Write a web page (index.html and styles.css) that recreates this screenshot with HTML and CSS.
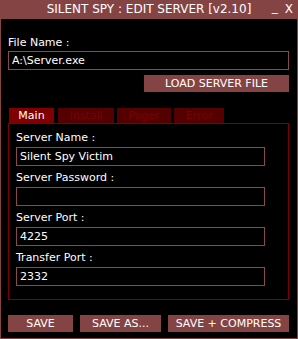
FILE: index.html
```html
<!DOCTYPE html>
<html lang="en">
<head>
  <meta charset="UTF-8">
  <title>Silent Spy : Edit Server</title>
  <link rel="stylesheet" href="styles.css">
</head>
<body>
  <div class="window">
    <div class="title-bar">
      <span></span>
      <span class="title">SILENT SPY : EDIT SERVER [v2.10]</span>
      <div class="title-controls">
        <span class="ctrl ctrl-min">_</span>
        <span class="ctrl">X</span>
      </div>
    </div>

    <div class="window-body">
      <label class="field-label">File Name :</label>
      <input class="field file-field" type="text" value="A:\Server.exe">
      <div class="load-row">
        <button class="btn btn-load">LOAD SERVER FILE</button>
      </div>

      <div class="tabs">
        <div class="tab active">Main</div>
        <div class="tab tab-install">Install</div>
        <div class="tab tab-pager">Pager</div>
        <div class="tab tab-error">Error</div>
      </div>

      <div class="panel">
        <label class="field-label">Server Name :</label>
        <input class="field panel-field" type="text" value="Silent Spy Victim">
        <label class="field-label">Server Password :</label>
        <input class="field panel-field" type="text" value="">
        <label class="field-label">Server Port :</label>
        <input class="field panel-field" type="text" value="4225">
        <label class="field-label">Transfer Port :</label>
        <input class="field panel-field" type="text" value="2332">
      </div>

      <div class="actions">
        <button class="btn btn-save">SAVE</button>
        <button class="btn btn-save-as">SAVE AS...</button>
        <button class="btn btn-compress">SAVE + COMPRESS</button>
      </div>
    </div>
  </div>
</body>
</html>
```

FILE: styles.css
```css
:root {
  --frame: #844444;
  --panel-red: #800000;
  --tab-dim: #550000;
  --tab-dim-text: #7a0000;
  --field-border: #8a4a4a;
  --text: #ffffff;
}

* {
  margin: 0;
  padding: 0;
  box-sizing: border-box;
}

body {
  background: #000;
  font-family: 'DejaVu Sans', Verdana, sans-serif;
  font-size: 11px;
  color: var(--text);
}

.window {
  width: 298px;
  height: 339px;
  border: 1px solid var(--frame);
  border-top: none;
  background: #000;
  display: flex;
  flex-direction: column;
}

/* Title bar */
.title-bar {
  height: 19px;
  margin: 0 -1px;
  background: var(--frame);
  display: grid;
  grid-template-columns: 1fr auto 1fr;
  align-items: center;
  font-size: 12px;
  line-height: 19px;
}

.title-controls {
  display: flex;
  justify-content: flex-end;
  gap: 7px;
  padding-right: 5px;
}

.ctrl-min {
  position: relative;
  top: -2px;
}

/* Body */
.window-body {
  padding: 17px 8px 0 7px;
  display: flex;
  flex-direction: column;
}

.field-label {
  display: block;
  line-height: 13px;
  margin-bottom: 2px;
}

.field {
  display: block;
  height: 19px;
  padding: 0 3px;
  background: #000;
  border: 1px solid var(--field-border);
  color: var(--text);
  font-family: inherit;
  font-size: 11px;
  outline: none;
}

.file-field {
  width: 100%;
}

.load-row {
  display: flex;
  justify-content: flex-end;
  margin-top: 5px;
}

.btn {
  height: 17px;
  background: var(--frame);
  border: none;
  color: var(--text);
  font-family: inherit;
  font-size: 11px;
  line-height: 17px;
  text-align: center;
  cursor: pointer;
}

.btn-load {
  width: 145px;
}

/* Tabs */
.tabs {
  display: flex;
  margin-top: 16px;
  padding-left: 1px;
  gap: 3px;
}

.tab {
  height: 15px;
  line-height: 15px;
  text-align: center;
  background: var(--tab-dim);
  color: var(--tab-dim-text);
}

.tab.active {
  width: 45px;
  margin-right: 1px;
  background: var(--panel-red);
  color: var(--text);
}

.tab-install { width: 56px; }
.tab-pager { width: 54px; }
.tab-error { width: 50px; }

.panel {
  border: 1px solid var(--panel-red);
  padding: 7px 7px 8px;
  height: 177px;
}

.panel .field-label {
  margin-bottom: 3px;
}

.panel-field {
  width: 249px;
  margin-bottom: 5px;
}

/* Bottom buttons */
.actions {
  display: flex;
  gap: 7px;
  margin-top: 15px;
}

.btn-save { width: 65px; }
.btn-save-as { width: 81px; }
.btn-compress { width: 121px; }
```
